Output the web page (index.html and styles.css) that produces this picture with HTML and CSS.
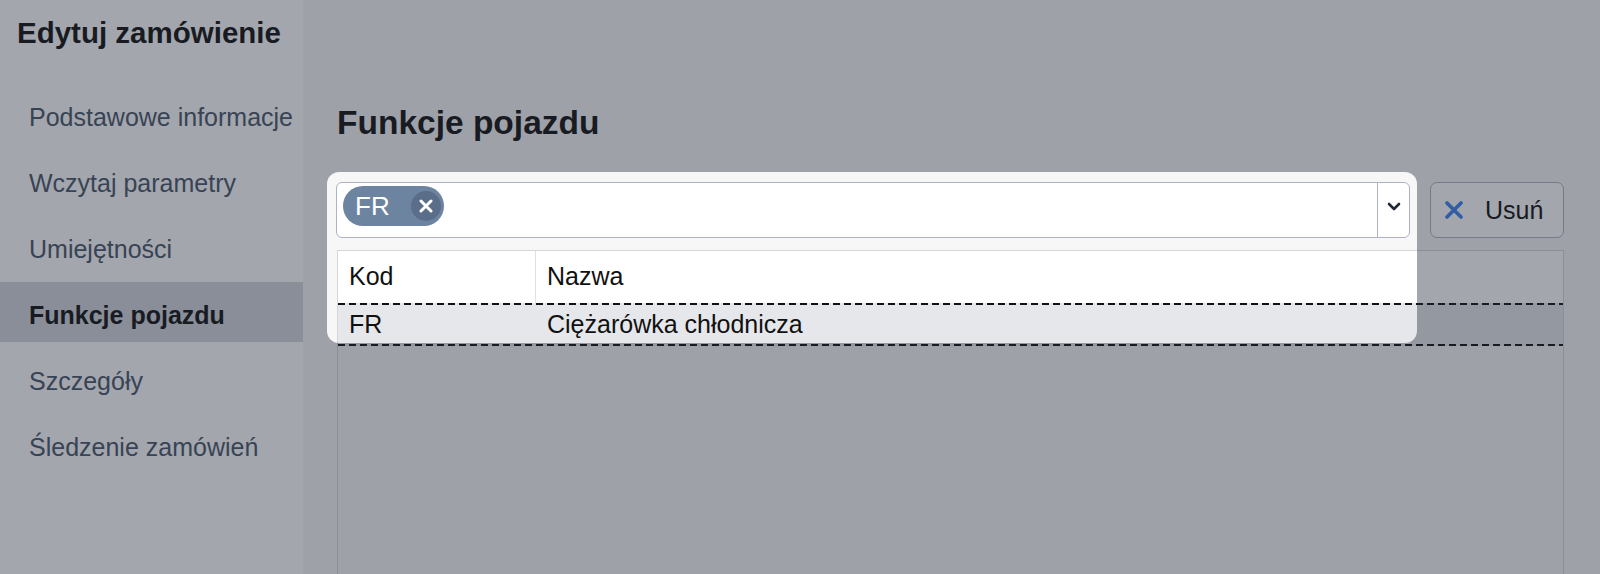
FILE: index.html
```html
<!DOCTYPE html>
<html lang="pl">
<head>
<meta charset="utf-8">
<title>Edytuj zamówienie</title>
<link rel="stylesheet" href="styles.css">
</head>
<body>
<div class="app">
  <aside class="sidebar">
    <h1 class="sidebar-title">Edytuj zamówienie</h1>
    <nav class="nav">
      <a class="nav-item">Podstawowe informacje</a>
      <a class="nav-item">Wczytaj parametry</a>
      <a class="nav-item">Umiejętności</a>
      <a class="nav-item is-active">Funkcje pojazdu</a>
      <a class="nav-item">Szczegóły</a>
      <a class="nav-item">Śledzenie zamówień</a>
    </nav>
  </aside>
  <main class="main">
    <h2 class="page-title">Funkcje pojazdu</h2>
    <div class="toolbar">
      <div class="select">
        <div class="select-value">
          <span class="chip">
            <span class="chip-label">FR</span>
            <span class="chip-remove">
              <svg width="14" height="14" viewBox="0 0 14 14"><path d="M2 2L12 12M12 2L2 12" stroke="#fff" stroke-width="3" stroke-linecap="round" fill="none"/></svg>
            </span>
          </span>
        </div>
        <div class="select-indicator">
          <svg width="14" height="9" viewBox="0 0 14 9"><path d="M2 2L7 7L12 2" stroke="#1f2937" stroke-width="2.6" stroke-linecap="round" stroke-linejoin="round" fill="none"/></svg>
        </div>
      </div>
      <button class="btn">
        <svg class="btn-icon" width="18" height="18" viewBox="0 0 18 18"><path d="M2 2L16 16M16 2L2 16" stroke="#3b82f6" stroke-width="3.6" stroke-linecap="round" fill="none"/></svg>
        <span>Usuń</span>
      </button>
    </div>
    <div class="table">
      <div class="thead">
        <div class="th">Kod</div>
        <div class="th th-sep">Nazwa</div>
      </div>
      <div class="tr is-selected">
        <div class="td">FR</div>
        <div class="td">Ciężarówka chłodnicza</div>
      </div>
    </div>
  </main>
</div>
<div class="spotlight"></div>
</body>
</html>
```
FILE: styles.css
```css
* { box-sizing: border-box; }

html, body {
  margin: 0;
  padding: 0;
  height: 100%;
  overflow: hidden;
}

body {
  font-family: "Liberation Sans", Arial, Helvetica, sans-serif;
  color: #111;
  background: #f7f7f8;
}

.app {
  display: flex;
  height: 100vh;
}

.sidebar {
  width: 303px;
  flex: 0 0 303px;
  background: #ffffff;
  padding-top: 15px;
}

.sidebar-title {
  margin: 0;
  padding-left: 17px;
  font-size: 29.5px;
  line-height: 36px;
  font-weight: 700;
  color: #111;
}

.nav {
  margin-top: 33px;
  display: flex;
  flex-direction: column;
  gap: 6px;
}

.nav-item {
  display: block;
  height: 60px;
  padding: 18px 0 12px 29px;
  font-size: 25px;
  line-height: 30px;
  color: #475569;
  white-space: nowrap;
}

.nav-item.is-active {
  background: #d3d6dc;
  color: #111;
  font-weight: 700;
}

.main {
  flex: 1;
  display: flex;
  flex-direction: column;
  padding: 103px 36px 0 33px;
  background: #f7f7f8;
  overflow: hidden;
}

.main > * { flex-shrink: 0; }

.page-title {
  margin: 0 0 39px 0;
  font-size: 33.5px;
  line-height: 40px;
  font-weight: 700;
  color: #111;
  padding-left: 1px;
}

.toolbar {
  display: flex;
  gap: 20px;
  height: 56px;
}

.select {
  flex: 1;
  display: flex;
  background: #fff;
  border: 1px solid #aeb2c6;
  border-radius: 6px;
}

.select-value {
  flex: 1;
  padding: 3px 6px;
}

.chip {
  display: inline-flex;
  align-items: center;
  height: 40px;
  width: 101px;
  padding: 0 3px 0 12px;
  border-radius: 20px;
  background: #6d84a1;
  color: #fff;
}

.chip-label {
  font-size: 26px;
  line-height: 30px;
  width: 56px;
}

.chip-remove {
  width: 30px;
  height: 30px;
  border-radius: 50%;
  background: #5b6e89;
  display: flex;
  align-items: center;
  justify-content: center;
}

.select-indicator {
  width: 32px;
  border-left: 1px solid #aeb2c6;
  display: flex;
  justify-content: center;
  padding-top: 19px;
}

.btn {
  width: 134px;
  display: flex;
  align-items: center;
  gap: 22px;
  padding: 0 0 0 14px;
  margin: 0;
  background: #fff;
  border: 1px solid #aeb2c6;
  border-radius: 7px;
  font-family: inherit;
  font-size: 25px;
  color: #111;
}

.btn-icon { flex: 0 0 auto; }

.table {
  margin-top: 12px;
  margin-left: 1px;
  min-height: 420px;
  background: #f7f7f8;
  border: 1px solid #d5d7dc;
  border-bottom: none;
}

.thead {
  display: grid;
  grid-template-columns: 197px 1fr;
  background: #fff;
}

.th {
  padding: 10px 11px 12px;
  height: 52px;
  font-size: 25px;
  line-height: 30px;
  font-weight: 400;
  color: #111;
}

.th-sep {
  border-left: 1px solid #dfe0e3;
}

.tr {
  display: grid;
  grid-template-columns: 197px 1fr;
  height: 43px;
}

.tr.is-selected {
  background-color: #e6e7ea;
  background-image:
    repeating-linear-gradient(to right, #111 0 7px, transparent 7px 11px),
    repeating-linear-gradient(to right, #111 0 7px, transparent 7px 11px);
  background-size: 100% 2px, 100% 2px;
  background-position: 0 0, 0 100%;
  background-repeat: no-repeat;
}

.td {
  padding: 6px 11px 7px;
  font-size: 25px;
  line-height: 30px;
  color: #111;
  white-space: nowrap;
}

.td + .td { padding-left: 12px; }

.spotlight {
  position: absolute;
  left: 327px;
  top: 172px;
  width: 1090px;
  height: 171px;
  border-radius: 12px;
  box-shadow: 0 0 0 3000px rgba(35, 42, 58, 0.42);
  pointer-events: none;
}
```
